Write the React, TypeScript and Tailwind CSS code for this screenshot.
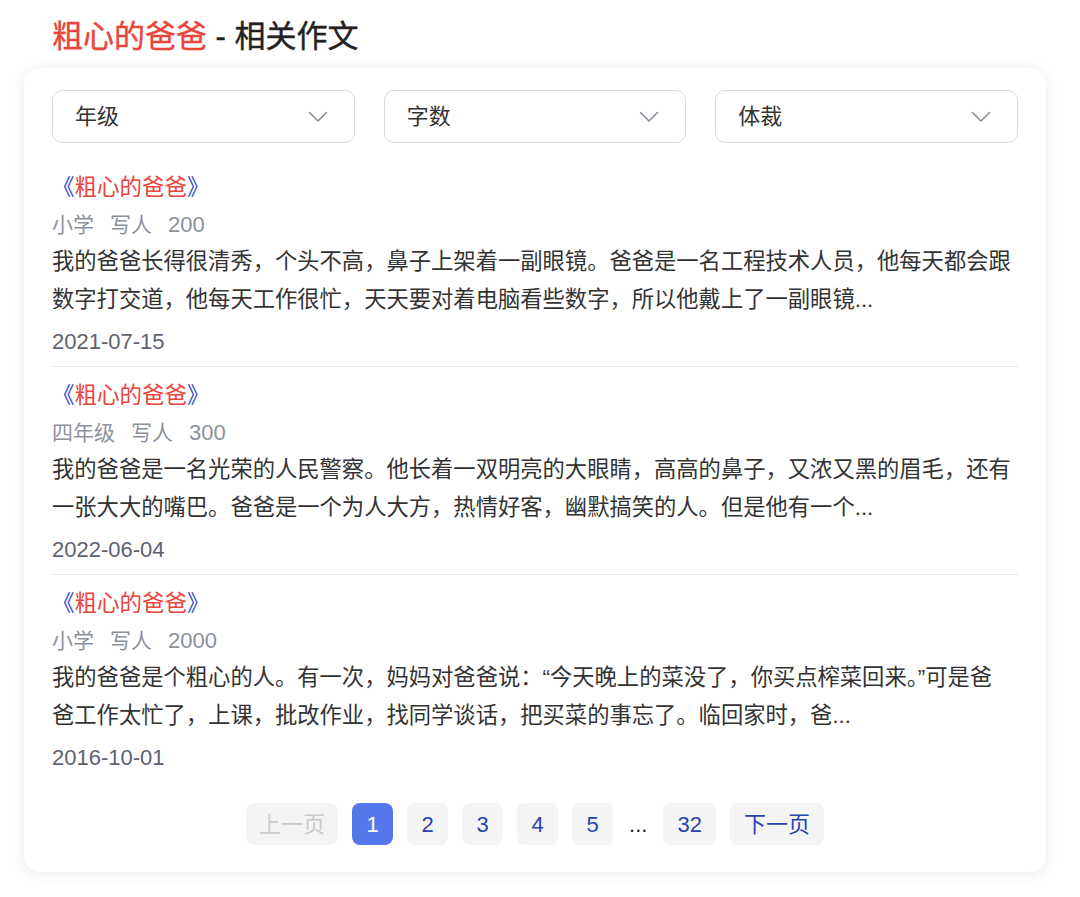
import React from "react";

type Essay = {
  grade: string;
  genre: string;
  words: string;
  excerpt: string;
  date: string;
};

const essays: Essay[] = [
  {
    grade: "小学",
    genre: "写人",
    words: "200",
    excerpt:
      "我的爸爸长得很清秀，个头不高，鼻子上架着一副眼镜。爸爸是一名工程技术人员，他每天都会跟数字打交道，他每天工作很忙，天天要对着电脑看些数字，所以他戴上了一副眼镜...",
    date: "2021-07-15",
  },
  {
    grade: "四年级",
    genre: "写人",
    words: "300",
    excerpt:
      "我的爸爸是一名光荣的人民警察。他长着一双明亮的大眼睛，高高的鼻子，又浓又黑的眉毛，还有一张大大的嘴巴。爸爸是一个为人大方，热情好客，幽默搞笑的人。但是他有一个...",
    date: "2022-06-04",
  },
  {
    grade: "小学",
    genre: "写人",
    words: "2000",
    excerpt:
      "我的爸爸是个粗心的人。有一次，妈妈对爸爸说：“今天晚上的菜没了，你买点榨菜回来。”可是爸爸工作太忙了，上课，批改作业，找同学谈话，把买菜的事忘了。临回家时，爸...",
    date: "2016-10-01",
  },
];

const filters = ["年级", "字数", "体裁"];
const pages = ["1", "2", "3", "4", "5"];

function Chevron() {
  return (
    <svg width="20" height="12" viewBox="0 0 20 12" fill="none">
      <polyline
        points="1.5,1.5 10,10 18.5,1.5"
        stroke="#8a8e98"
        strokeWidth="1.6"
        strokeLinecap="round"
        strokeLinejoin="round"
      />
    </svg>
  );
}

export default function App() {
  return (
    <div
      className="min-h-[897px] bg-white px-[24px] pt-[17px]"
      style={{ fontFamily: '"Liberation Sans", "Noto Sans CJK SC", sans-serif' }}
    >
      <h1 className="mb-[11px] pl-[28px] text-[31px] leading-[40px] font-normal text-[#222] [-webkit-text-stroke:0.4px_currentColor]">
        <span className="text-[#e8453c]">粗心的爸爸</span> - 相关作文
      </h1>

      <section className="w-[1022px] rounded-[16px] bg-white px-[28px] pt-[22px] pb-[27px] shadow-[0_2px_14px_rgba(0,0,0,0.08)]">
        <div className="grid grid-cols-3 gap-[29px]">
          {filters.map((label) => (
            <div
              key={label}
              className="flex h-[53px] items-center justify-between rounded-[10px] border border-[#d8dae0] pr-[26px] pl-[22px] text-[22px] text-[#333]"
            >
              <span>{label}</span>
              <Chevron />
            </div>
          ))}
        </div>

        <div className="mt-[16px]">
          {essays.map((essay, index) => (
            <article
              key={essay.date}
              className={`pt-[10px] pb-[5px] ${
                index < essays.length - 1 ? "border-b border-[#e6e7ea]" : ""
              }`}
            >
              <p className="text-[22.5px] leading-[37px]">
                <span className="text-[#2a4bcb]">《</span>
                <span className="text-[#e8453c]">粗心的爸爸</span>
                <span className="text-[#2a4bcb]">》</span>
              </p>
              <p className="flex gap-[16px] text-[21px] leading-[37px] text-[#8d919b]">
                <span>{essay.grade}</span>
                <span>{essay.genre}</span>
                <span className="text-[22px]">{essay.words}</span>
              </p>
              <p className="pr-[5px] text-[22.3px] leading-[38px] text-[#333]">{essay.excerpt}</p>
              <p className="mt-[4px] text-[22px] leading-[38px] text-[#5d6270]">{essay.date}</p>
            </article>
          ))}
        </div>

        <nav className="mt-[21px] flex items-center justify-center gap-[14px] text-[22px]">
          <span className="flex h-[42px] items-center rounded-[8px] bg-[#f4f4f5] px-[13px] text-[#c9cbcf]">
            上一页
          </span>
          {pages.map((page) => (
            <span
              key={page}
              className={`flex h-[42px] w-[41px] items-center justify-center rounded-[8px] ${
                page === "1" ? "bg-[#5578ea] text-white" : "bg-[#f4f4f5] text-[#2944b0]"
              }`}
            >
              {page}
            </span>
          ))}
          <span className="px-[2px] text-[#222]">...</span>
          <span className="flex h-[42px] items-center rounded-[8px] bg-[#f4f4f5] px-[14px] text-[#2944b0]">
            32
          </span>
          <span className="flex h-[42px] items-center rounded-[8px] bg-[#f4f4f5] px-[14px] text-[#2944b0]">
            下一页
          </span>
        </nav>
      </section>
    </div>
  );
}
